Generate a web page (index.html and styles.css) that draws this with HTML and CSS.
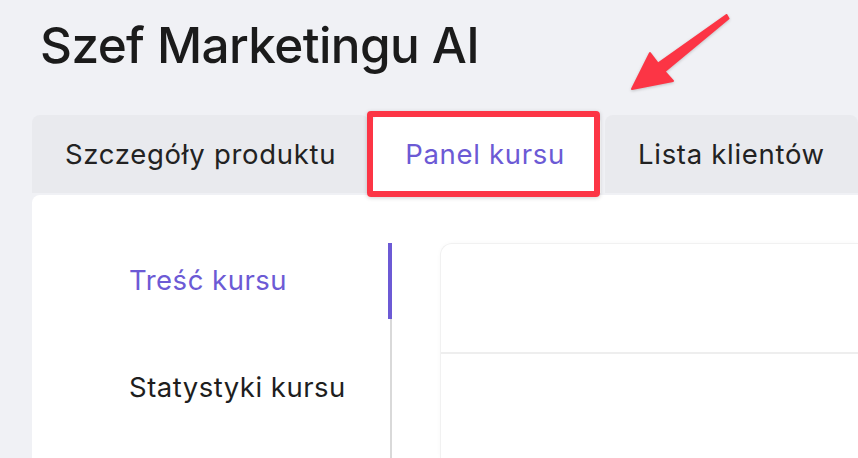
FILE: index.html
```html
<!DOCTYPE html>
<html lang="pl">
<head>
<meta charset="utf-8">
<title>Szef Marketingu AI</title>
<link rel="stylesheet" href="styles.css">
</head>
<body>
<div class="page">
  <h1 class="title">Szef Marketingu AI</h1>
  <div class="tabs">
    <div class="tab">Szczegóły produktu</div>
    <div class="tab active">Panel kursu</div>
    <div class="tab">Lista klientów</div>
  </div>
  <div class="card">
    <nav class="side">
      <div class="side-item active">Treść kursu</div>
      <div class="side-item">Statystyki kursu</div>
    </nav>
    <section class="panel">
      <div class="panel-head"></div>
      <div class="panel-body"></div>
    </section>
  </div>
  <div class="highlight"></div>
  <svg class="arrow" width="858" height="458" viewBox="0 0 858 458" aria-hidden="true">
    <polygon points="632,89 673,81 664.5,71.5 728.5,18.5 726.5,15 658,63.5 650,53" />
  </svg>
</div>
</body>
</html>
```
FILE: styles.css
```css
* { box-sizing: border-box; }
html, body { margin: 0; padding: 0; }
body {
  background: #f0f1f5;
  font-family: Inter, "Noto Sans", sans-serif;
  color: #1e1e1e;
  overflow: hidden;
}
.page {
  position: relative;
  width: 858px;
  height: 458px;
  display: flex;
  flex-direction: column;
}
.title {
  margin: 0;
  padding: 20px 0 0 40px;
  font-size: 49.5px;
  line-height: 50px;
  font-weight: 500;
  letter-spacing: -0.6px;
  color: #1b1b1b;
}
.tabs {
  display: flex;
  gap: 4px;
  margin: 45px 0 0 32px;
  height: 78px;
}
.tab {
  display: flex;
  align-items: center;
  padding: 0 33px;
  background: #e9eaee;
  border-radius: 8px 8px 0 0;
  font-size: 27.5px;
  letter-spacing: 0.7px;
  color: #222;
  white-space: nowrap;
}
.tab.active {
  padding: 0 36px 0 32px;
  background: #fff;
  color: #6c5ad5;
}
.card {
  flex: 1;
  margin: 2px 0 0 32px;
  background: #fff;
  border-radius: 8px 0 0 0;
  display: flex;
  gap: 48px;
  padding-top: 48px;
}
.side {
  width: 360px;
  flex: none;
  border-right: 2px solid #d9d9d9;
  padding-left: 97px;
  display: flex;
  flex-direction: column;
  gap: 31px;
}
.side-item {
  position: relative;
  height: 76px;
  display: flex;
  align-items: center;
  padding-bottom: 2px;
  font-size: 27.5px;
  letter-spacing: 0.5px;
  color: #1e1e1e;
  white-space: nowrap;
}
.side-item.active { color: #6c5ad5; }
.side-item.active::after {
  content: "";
  position: absolute;
  top: 0;
  bottom: 0;
  right: -2px;
  width: 4px;
  background: #6c5ad5;
}
.panel {
  flex: 1;
  border: 1px solid #f1f1f1;
  border-right: none;
  border-bottom: none;
  border-radius: 12px 0 0 0;
  box-shadow: 0 0 4px rgba(0, 0, 0, 0.03);
}
.panel-head {
  height: 110px;
  border-bottom: 2px solid #eeeeee;
}
.highlight {
  position: absolute;
  left: 367px;
  top: 111px;
  width: 233px;
  height: 86px;
  border: 6px solid #fc3545;
  border-radius: 4px;
  box-shadow: 0 1px 4px rgba(0, 0, 0, 0.18);
}
.arrow {
  position: absolute;
  left: 0;
  top: 0;
  pointer-events: none;
  filter: drop-shadow(0 1px 1.5px rgba(0, 0, 0, 0.2));
}
.arrow polygon {
  fill: #fc3545;
  stroke: #fc3545;
  stroke-width: 2;
  stroke-linejoin: round;
}
```
